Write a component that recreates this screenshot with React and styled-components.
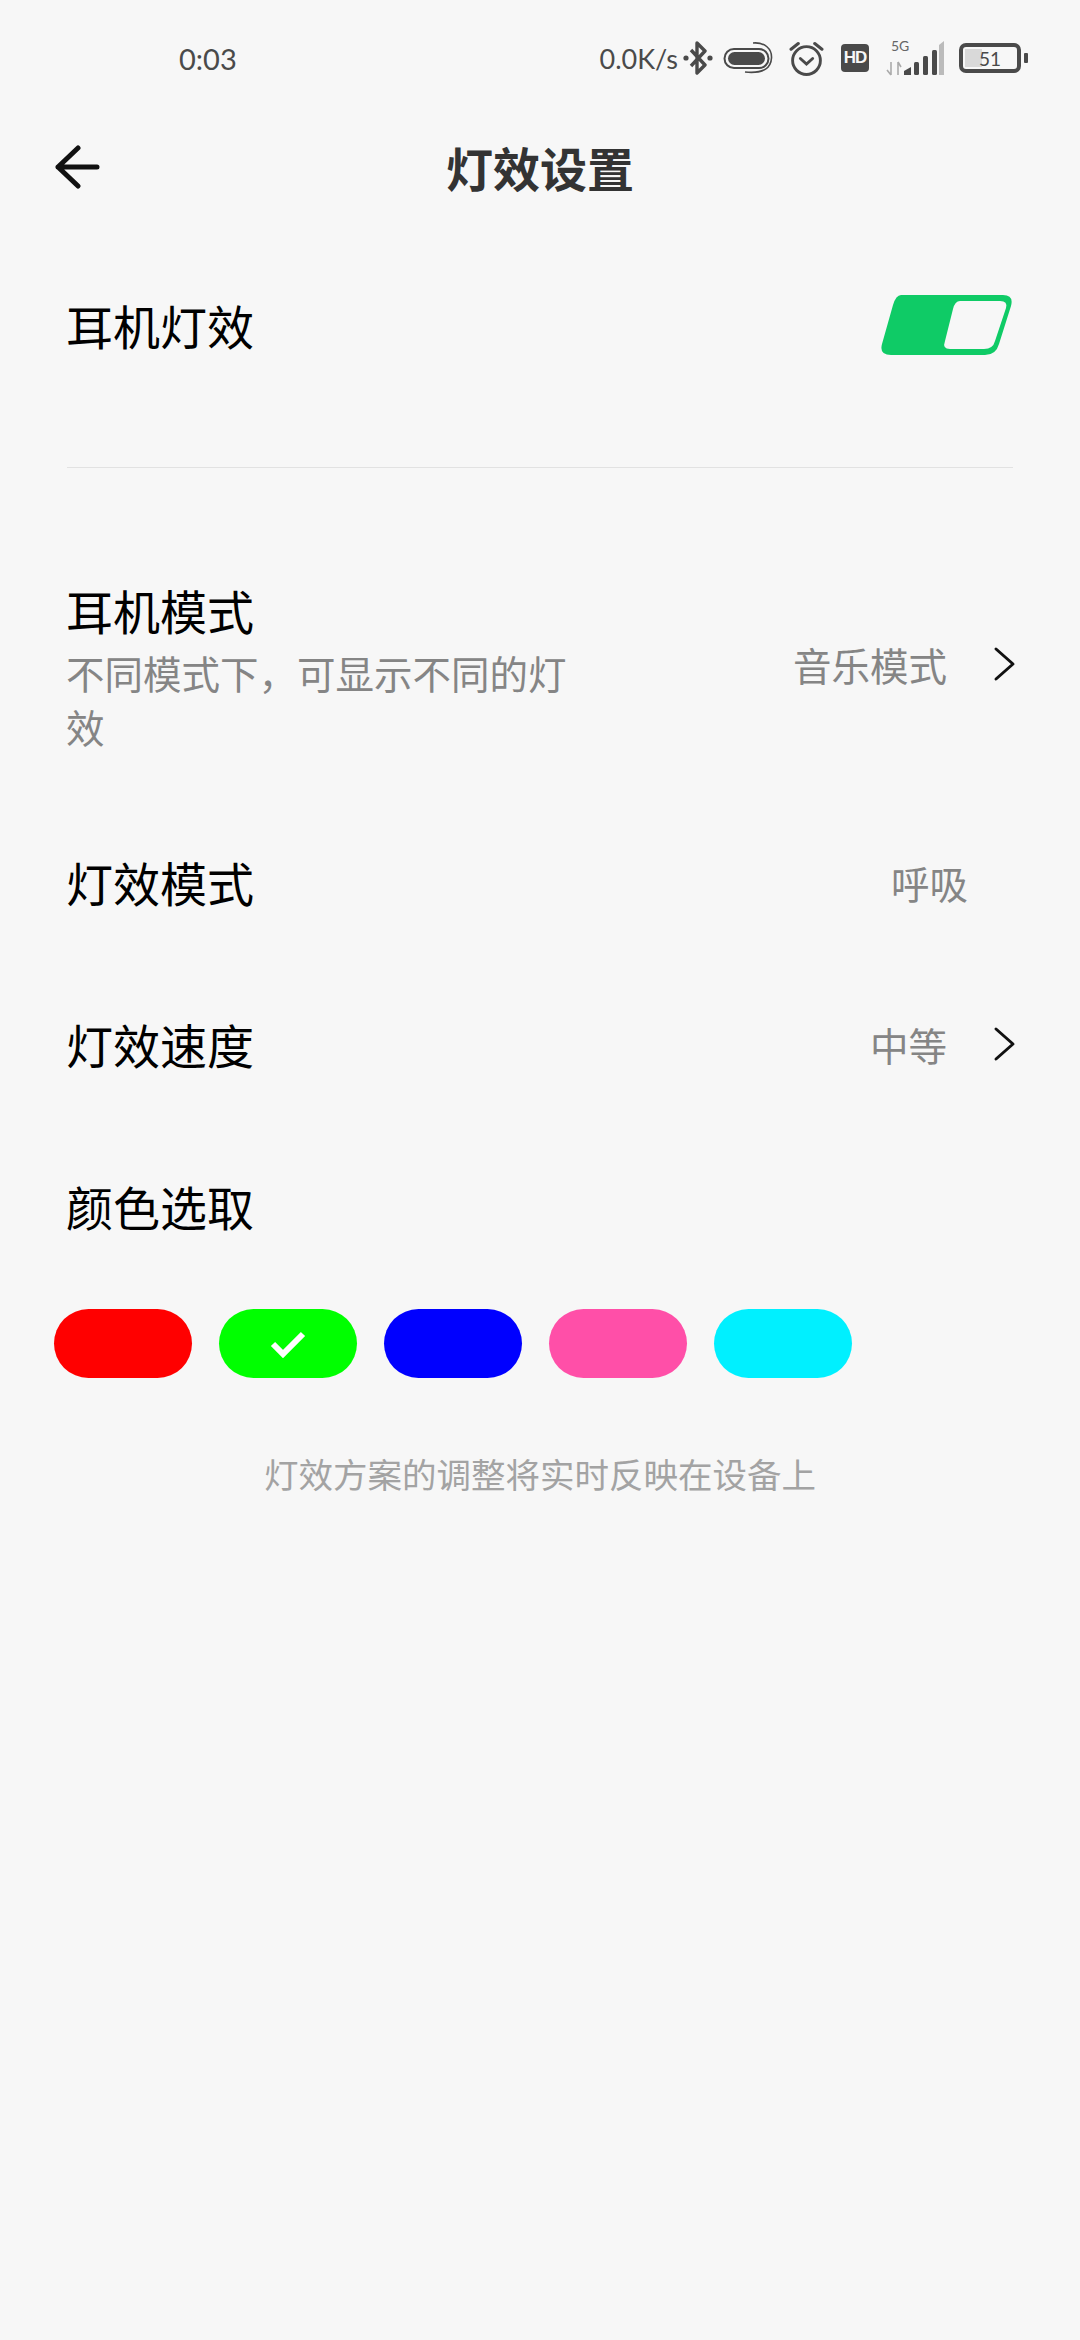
import styled, { createGlobalStyle } from "styled-components";

const GlobalStyle = createGlobalStyle`
  html, body {
    margin: 0;
    padding: 0;
    background: #f7f7f7;
  }
  * {
    box-sizing: border-box;
  }
`;

const Page = styled.div`
  width: 1080px;
  height: 2340px;
  overflow: hidden;
  background: #f7f7f7;
  font-family: "Noto Sans CJK SC", "Noto Sans", sans-serif;
  color: #000;
`;

const StatusBar = styled.div`
  height: 116px;
  padding: 0 52px 0 179px;
  display: flex;
  align-items: center;
  justify-content: space-between;
  color: #4a4a4a;
  font-family: "Lato", "Noto Sans", sans-serif;
`;

const StatusRight = styled.div`
  display: flex;
  align-items: center;
`;

const Time = styled.span`
  font-size: 29px;
`;

const Speed = styled.span`
  font-size: 27px;
  margin-right: 5px;
  white-space: nowrap;
`;

const StatusIcon = styled.svg`
  display: block;
  flex: none;
  margin-right: ${(props) => props.$gap || 0}px;
`;

const Header = styled.div`
  position: relative;
  height: 108px;
  padding-bottom: 6px;
  display: flex;
  align-items: center;
  justify-content: center;
`;

const BackIcon = styled.svg`
  position: absolute;
  left: 54px;
  top: 29px;
`;

const Title = styled.h1`
  margin: 0;
  font-size: 47px;
  line-height: 60px;
  font-weight: 700;
  color: #333;
`;

const SwitchRow = styled.div`
  height: 243px;
  padding: 0 67px 42px 66px;
  display: flex;
  align-items: center;
  justify-content: space-between;
`;

const Divider = styled.div`
  height: 1px;
  margin: 0 67px 112px;
  background: #e2e2e2;
`;

const Row = styled.div`
  min-height: ${(props) => props.$height || 162}px;
  margin-bottom: ${(props) => props.$after || 0}px;
  padding: 0 67px 0 66px;
  display: flex;
  align-items: center;
  justify-content: space-between;
`;

const RowText = styled.div`
  max-width: 510px;
`;

const RowTitle = styled.div`
  font-size: 47px;
  line-height: 60px;
`;

const RowHint = styled.div`
  font-size: 38.5px;
  line-height: 54px;
  margin-top: 5px;
  color: #858585;
`;

const RowRight = styled.div`
  display: flex;
  align-items: center;
  margin-bottom: ${(props) => props.$lift || 0}px;
`;

const RowValue = styled.span`
  font-size: 38.5px;
  line-height: 54px;
  color: #858585;
  margin-right: ${(props) => props.$gap}px;
`;

const ChevronIcon = styled.svg`
  display: block;
  margin-right: -4px;
`;

const Swatches = styled.div`
  margin-top: 22px;
  padding-left: 54px;
  display: flex;
  gap: 27px;
`;

const Swatch = styled.div`
  width: 138px;
  height: 69px;
  border-radius: 35px;
  background: ${(props) => props.$color};
  display: flex;
  align-items: center;
  justify-content: center;
`;

const Footnote = styled.div`
  margin-top: 69px;
  text-align: center;
  font-size: 34.5px;
  line-height: 52px;
  color: #a3a3a3;
`;

const Chevron = () => (
  <ChevronIcon width="24" height="36" viewBox="0 0 24 36" fill="none">
    <path d="M3 3 L20 18 L3 33" stroke="#111" strokeWidth="3" strokeLinecap="round" strokeLinejoin="round" />
  </ChevronIcon>
);

const Bluetooth = () => (
  <StatusIcon $gap={10} width="30" height="34" viewBox="0 0 30 34" fill="none">
    <path d="M8 9 L22 24 L14 32 V2 L22 10 L8 25" stroke="#4a4a4a" strokeWidth="3.4" strokeLinejoin="round" />
    <circle cx="3" cy="17" r="2.6" fill="#4a4a4a" />
    <circle cx="27" cy="17" r="2.6" fill="#4a4a4a" />
  </StatusIcon>
);

const Capsule = () => (
  <StatusIcon $gap={16} width="50" height="34" viewBox="0 0 50 34" fill="none">
    <rect x="1.5" y="8" width="44" height="19" rx="9.5" stroke="#4a4a4a" strokeWidth="2" />
    <rect x="5" y="11" width="37" height="13" rx="6.5" fill="#4a4a4a" />
    <path d="M30 2 C42 1 49 8 48.5 17 C48 26 42 33 22 31" stroke="#4a4a4a" strokeWidth="1.6" />
  </StatusIcon>
);

const Alarm = () => (
  <StatusIcon $gap={17} width="35" height="35" viewBox="0 0 34 34" fill="none">
    <circle cx="17" cy="19" r="13.5" stroke="#4a4a4a" strokeWidth="2.8" />
    <path d="M11 17 L17 22.5 L23 17" stroke="#4a4a4a" strokeWidth="2.8" strokeLinecap="round" />
    <path d="M2 8 L9 2.5 M32 8 L25 2.5" stroke="#4a4a4a" strokeWidth="3" strokeLinecap="round" />
  </StatusIcon>
);

const HdBadge = styled.span`
  flex: none;
  width: 28px;
  height: 28px;
  margin-right: 17px;
  border-radius: 4px;
  background: #4a4a4a;
  color: #f7f7f7;
  font-family: "Liberation Sans", sans-serif;
  font-size: 17px;
  font-weight: 700;
  letter-spacing: -1px;
  display: flex;
  align-items: center;
  justify-content: center;
`;

const Signal = () => (
  <StatusIcon $gap={15} width="58" height="36" viewBox="0 0 58 36" fill="none">
    <text x="5" y="11" fontSize="14" fill="#666" fontFamily="Lato, sans-serif">5G</text>
    <path d="M5 22 V35 M1 30 L5 35 M12 35 V22 M12 22 L15 27" stroke="#aaa" strokeWidth="1.6" />
    <path d="M18 35 V31 L25 27 V35 Z" fill="#4a4a4a" />
    <rect x="28" y="22" width="5" height="13" rx="1.5" fill="#4a4a4a" />
    <rect x="37" y="16" width="5" height="19" rx="1.5" fill="#4a4a4a" />
    <rect x="46" y="10" width="5" height="25" rx="1.5" fill="#4a4a4a" />
    <path d="M53 5 L58 1 V35 H53 Z" fill="#bbb" />
  </StatusIcon>
);

const BatteryBody = styled.div`
  position: relative;
  width: 62px;
  height: 30px;
  border: 4px solid #4a4a4a;
  border-radius: 7px;
  display: flex;
  align-items: center;
  justify-content: center;
  font-size: 19px;
  color: #4a4a4a;
`;

const BatteryFill = styled.div`
  position: absolute;
  left: 2px;
  top: 2px;
  bottom: 2px;
  background: #d9d9d9;
`;

const BatteryLabel = styled.span`
  position: relative;
`;

const BatteryCap = styled.div`
  width: 4px;
  height: 10px;
  margin-left: 3px;
  border-radius: 1px;
  background: #4a4a4a;
`;

const Battery = ({ level }) => (
  <>
    <BatteryBody>
      <BatteryFill style={{ width: `${level * 0.6}%` }} />
      <BatteryLabel>{level}</BatteryLabel>
    </BatteryBody>
    <BatteryCap />
  </>
);

const colors = [
  { color: "#ff0000" },
  { color: "#00ff00", checked: true },
  { color: "#0000ff" },
  { color: "#ff4fa8" },
  { color: "#00f0ff" },
];

const App = () => {
  return (
    <Page>
      <GlobalStyle />
      <StatusBar>
        <Time>0:03</Time>
        <StatusRight>
          <Speed>0.0K/s</Speed>
          <Bluetooth />
          <Capsule />
          <Alarm />
          <HdBadge>HD</HdBadge>
          <Signal />
          <Battery level={51} />
        </StatusRight>
      </StatusBar>

      <Header>
        <BackIcon width="48" height="44" viewBox="0 0 48 44" fill="none">
          <path d="M24 3 L4 22 L24 41 M4 22 H43" stroke="#111" strokeWidth="5" strokeLinecap="round" strokeLinejoin="round" />
        </BackIcon>
        <Title>灯效设置</Title>
      </Header>

      <SwitchRow>
        <RowTitle>耳机灯效</RowTitle>
        <svg width="132" height="60" viewBox="0 0 132 60">
          <path
            d="M20 0 H122 Q133 0 130 11 L118 49 Q115 60 104 60 H10 Q-2 60 1 49 L12 10 Q15 0 20 0 Z"
            fill="#0fcb66"
          />
          <path
            d="M79 6 H119 Q127 6 125 13 L114 46 Q112 54 103 54 H69 Q61 54 64 46 L72 14 Q74 6 79 6 Z"
            fill="#f7f7f7"
          />
        </svg>
      </SwitchRow>
      <Divider />

      <Row $height={173} $after={48}>
        <RowText>
          <RowTitle>耳机模式</RowTitle>
          <RowHint>不同模式下，可显示不同的灯效</RowHint>
        </RowText>
        <RowRight $lift={5}>
          <RowValue $gap={46}>音乐模式</RowValue>
          <Chevron />
        </RowRight>
      </Row>

      <Row>
        <RowTitle>灯效模式</RowTitle>
        <RowRight>
          <RowValue $gap={45}>呼吸</RowValue>
        </RowRight>
      </Row>

      <Row>
        <RowTitle>灯效速度</RowTitle>
        <RowRight>
          <RowValue $gap={46}>中等</RowValue>
          <Chevron />
        </RowRight>
      </Row>

      <Row>
        <RowTitle>颜色选取</RowTitle>
      </Row>

      <Swatches>
        {colors.map((c) => (
          <Swatch key={c.color} $color={c.color}>
            {c.checked && (
              <svg width="36" height="28" viewBox="0 0 36 28" fill="none">
                <path d="M3 14 L13 24 L33 4" stroke="#fff" strokeWidth="6" />
              </svg>
            )}
          </Swatch>
        ))}
      </Swatches>

      <Footnote>灯效方案的调整将实时反映在设备上</Footnote>
    </Page>
  );
};

export default App;
